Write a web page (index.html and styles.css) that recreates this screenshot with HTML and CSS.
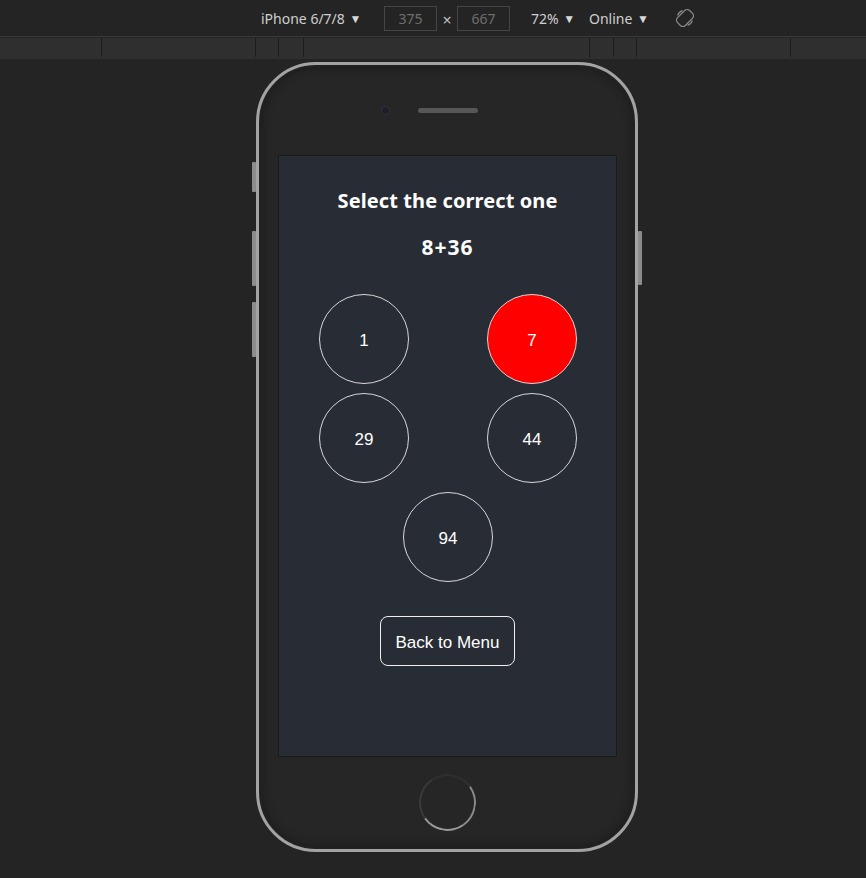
FILE: index.html
```html
<!DOCTYPE html>
<html>
<head>
<meta charset="utf-8">
<link rel="stylesheet" href="styles.css">
</head>
<body>
<div class="toolbar">
  <div class="device">iPhone 6/7/8 <span class="caret">▼</span></div>
  <div class="dims">
    <div class="dim-box">375</div>
    <span class="times">×</span>
    <div class="dim-box">667</div>
  </div>
  <div class="zoom">72% <span class="caret">▼</span></div>
  <div class="net">Online <span class="caret">▼</span></div>
  <svg class="rotate" width="20" height="20" viewBox="0 0 20 20">
    <g fill="none" stroke="#8a8a8a" stroke-width="1.3">
      <rect x="4.5" y="1.5" width="11" height="17" rx="3.5" transform="rotate(45 10 10)"/>
      <path d="M2.6 7.4 A7.8 7.8 0 0 1 7.4 2.6"/>
      <path d="M17.4 12.6 A7.8 7.8 0 0 1 12.6 17.4"/>
    </g>
  </svg>
</div>
<div class="ruler">
  <div class="seg s1"></div>
  <div class="seg s2"></div>
  <div class="seg s3"></div>
  <div class="seg s4"></div>
  <div class="seg s5"></div>
  <div class="seg s6"></div>
  <div class="seg s7"></div>
  <div class="seg s8"></div>
</div>
<div class="stage">
  <div class="phone">
    <div class="side-btn l1"></div>
    <div class="side-btn l2"></div>
    <div class="side-btn l3"></div>
    <div class="side-btn r1"></div>
    <div class="phone-top">
      <div class="camera"></div>
      <div class="speaker"></div>
    </div>
    <div class="screen">
      <h1 class="title">Select the correct one</h1>
      <h2 class="question">8+36</h2>
      <div class="options">
        <button class="opt">1</button>
        <button class="opt wrong">7</button>
        <button class="opt">29</button>
        <button class="opt">44</button>
        <button class="opt last">94</button>
      </div>
      <button class="back">Back to Menu</button>
    </div>
    <div class="phone-bottom">
      <div class="home"></div>
    </div>
  </div>
</div>
</body>
</html>
```
FILE: styles.css
```css
* { box-sizing: border-box; }
html, body { margin: 0; padding: 0; }
body {
  background: #242424;
  width: 866px;
  height: 878px;
  overflow: hidden;
  font-family: "Noto Sans", "Open Sans", sans-serif;
}
.toolbar {
  height: 37px;
  border-bottom: 1px solid #3a3a3a;
  display: flex;
  align-items: center;
  padding-left: 261px;
  color: #cfcfcf;
  font-size: 14px;
}
.caret { font-size: 12px; margin-left: 1px; position: relative; top: -1px; color: #d8d8d8; }
.device { width: 123px; }
.dims { display: flex; align-items: center; width: 147px; }
.dim-box {
  width: 53px;
  height: 25px;
  border: 1px solid #454545;
  color: #6e6e6e;
  text-align: center;
  line-height: 23px;
  font-size: 14px;
}
.times { width: 20px; text-align: center; color: #bbb; font-size: 16px; padding-top: 3px; }
.zoom { width: 58px; }
.net { width: 86px; }
.rotate { display: block; }
.ruler {
  margin-top: 1px;
  height: 21px;
  background: #2f2f2f;
  display: flex;
}
.seg { border-right: 1px solid #1c1c1c; height: 19px; flex: none; }
.s1 { width: 102px; }
.s2 { width: 154px; }
.s3 { width: 23px; }
.s4 { width: 25px; }
.s5 { width: 286px; }
.s6 { width: 24px; }
.s7 { width: 23px; }
.s8 { width: 154px; }
.stage {
  padding: 3px 0 0 256px;
}
.phone {
  position: relative;
  width: 382px;
  height: 790px;
  border: 3px solid #a3a3a3;
  border-radius: 60px;
  background: #262626;
  box-shadow: inset 0 0 8px 3px #1c1c1c, inset 0 0 2px 1px #3a3a3a;
  display: flex;
  flex-direction: column;
  align-items: center;
}
.side-btn {
  position: absolute;
  width: 4px;
  background: #8c8c8c;
  border-radius: 1px;
}
.l1 { left: -7px; top: 97px; height: 30px; }
.l2 { left: -7px; top: 166px; height: 55px; }
.l3 { left: -7px; top: 237px; height: 55px; }
.r1 { right: -7px; top: 166px; height: 54px; }
.phone-top {
  height: 90px;
  flex: none;
  width: 100%;
  display: flex;
  justify-content: center;
  align-items: center;
  gap: 29px;
  padding-right: 34px;
}
.camera {
  width: 7px;
  height: 7px;
  border-radius: 50%;
  background: #1e1e2a;
  box-shadow: 0 0 0 1px #333;
}
.speaker {
  width: 60px;
  height: 5px;
  border-radius: 3px;
  background: #575757;
}
.screen {
  flex: none;
  width: 339px;
  height: 602px;
  margin-left: 1px;
  background: #282c34;
  border: 1px solid #1a1a1a;
  display: flex;
  flex-direction: column;
  align-items: center;
  color: #fff;
}
.title {
  margin: 31px 0 0;
  font-size: 20px;
  line-height: 28px;
  font-weight: 700;
  letter-spacing: 0.1px;
}
.question {
  margin: 18px 0 0;
  font-size: 21px;
  line-height: 28px;
  font-weight: 700;
  letter-spacing: 1px;
}
.options {
  margin-top: 33px;
  margin-left: 1px;
  display: grid;
  grid-template-columns: 90px 90px;
  column-gap: 78px;
  row-gap: 9px;
}
.opt {
  width: 90px;
  height: 90px;
  border-radius: 50%;
  border: 1px solid #d8d8d8;
  background: transparent;
  color: #fff;
  font-family: "Liberation Sans", Arial, sans-serif;
  font-size: 17px;
  padding: 4px 0 0;
}
.opt.wrong { background: #ff0000; }
.opt.last { grid-column: 1 / span 2; justify-self: center; }
.back {
  margin-top: 34px;
  height: 50px;
  padding: 3px 15px 0;
  border: 1.5px solid #f0f0f0;
  border-radius: 8px;
  background: transparent;
  color: #fff;
  font-family: "Liberation Sans", Arial, sans-serif;
  font-size: 17px;
}
.phone-bottom {
  flex: 1;
  width: 100%;
  display: flex;
  justify-content: center;
  align-items: center;
  padding-bottom: 2px;
}
.home {
  width: 57px;
  height: 57px;
  border-radius: 50%;
  border: 2px solid;
  border-color: #2f2f2f #8a8a8a #9a9a9a #3a3a3a;
  transform: rotate(10deg);
}
```
